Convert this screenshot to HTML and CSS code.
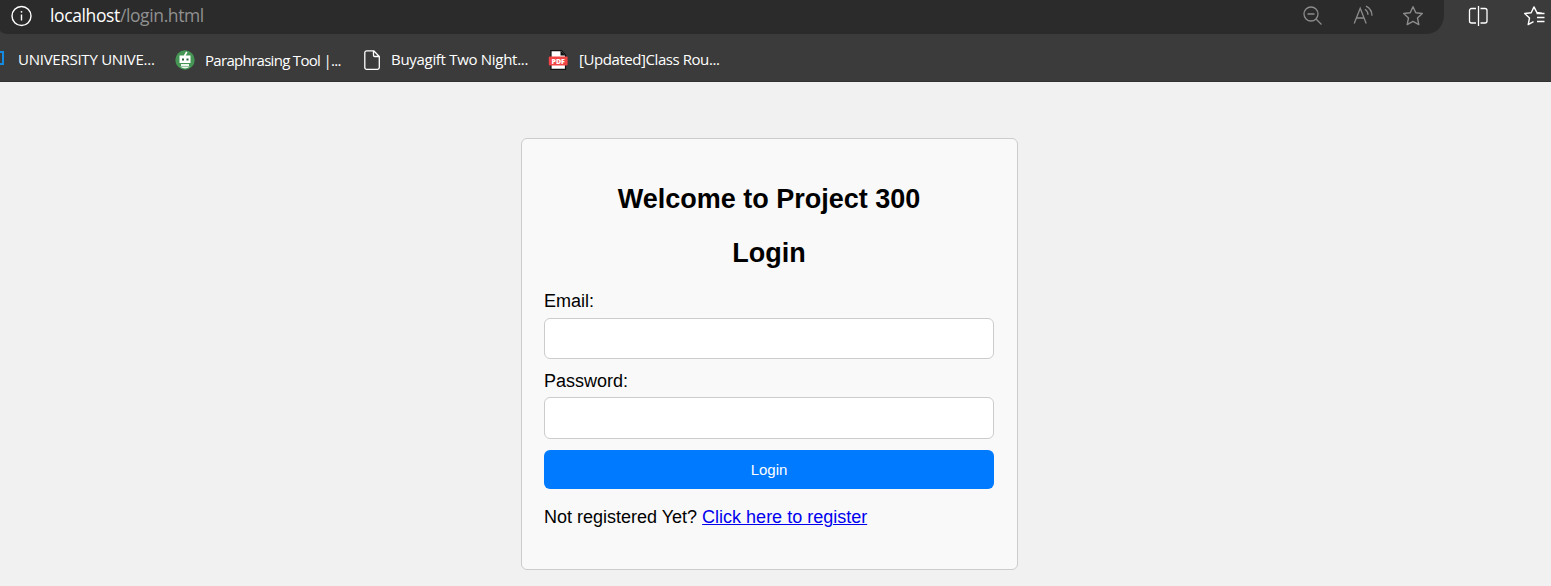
FILE: index.html
```
<!DOCTYPE html>
<html lang="en">
<head>
<meta charset="utf-8">
<title>Login</title>
<link rel="stylesheet" href="styles.css">
</head>
<body>
<header class="chrome">
  <div class="toolbar">
    <div class="address">
      <svg class="info" width="22" height="22" viewBox="0 0 22 22" fill="none" stroke="#fff" stroke-width="1.4"><circle cx="11.500" cy="11" r="9.500"/><path d="M11.500 9.500v6"/><circle cx="11.500" cy="6.800" r=".9" fill="#fff" stroke="none"/></svg>
      <div class="url">localhost<span class="path">/login.html</span></div>
      <div class="tools">
        <svg width="22" height="22" viewBox="0 0 22 22" fill="none" stroke="#8c8c8c" stroke-width="1.300"><circle cx="9" cy="9" r="7"/><path d="M5.500 9h7M14 14l5.500 5.500"/></svg>
        <svg width="22" height="22" viewBox="0 0 22 22" fill="none" stroke="#8c8c8c" stroke-width="1.300"><path d="M2.200 18.500 8.200 3.200 14.200 18.500M4.500 13H12M13 4.200q3 2 3 5.600M14 1.200q6 3 6 9.600"/></svg>
        <svg width="22" height="22" viewBox="0 0 22 22" fill="none" stroke="#8c8c8c" stroke-width="1.400" stroke-linejoin="round"><path d="M11 1.700l2.800 6 6.500.8-4.800 4.500 1.300 6.600-5.800-3.200-5.800 3.200L6.500 13 1.700 8.500l6.500-.8z"/></svg>
      </div>
    </div>
    <svg class="split" width="22" height="22" viewBox="0 0 22 22" fill="none" stroke="#fff" stroke-width="1.300"><path d="M9 3.500H4.500a2 2 0 0 0-2 2v10.500a2 2 0 0 0 2 2H9M13.500 3.500H18a2 2 0 0 1 2 2v10.500a2 2 0 0 1-2 2h-4.500M11.500 1v20"/></svg>
    <svg class="favorites" width="22" height="22" viewBox="0 0 22 22" fill="none" stroke="#fff" stroke-width="1.400" stroke-linejoin="round"><path d="M19 8.100l-5.200-.7L11 1.900 8.200 7.700l-6.500.8L6.500 13l-1.300 6.600 5.300-3M13.500 8.500h8M14 12.500h7.500M14 16.500h7.500"/></svg>
  </div>
  <nav class="bookmarks">
    <span class="edge-icon"></span>
    <span class="mark university">UNIVERSITY UNIVE...</span>
    <svg class="robot" width="20" height="20" viewBox="0 0 20 20"><circle cx="10" cy="10" r="9.700" fill="#459655"/><path d="M9.500 6 11.800 1.800" stroke="#fff" stroke-width="1.600"/><path d="M4.500 5.500h11v7.500h-11z" fill="#fff"/><path d="M7 8.500h2v2H7zm4.500 0h2v2h-2z" fill="#285d38"/><path d="M6 14h8v2H6zM5 16.500h10q-5 4-10 0z" fill="#e9f4ea"/></svg>
    <span class="mark paraphrase">Paraphrasing Tool |...</span>
    <svg class="page" width="16" height="20" viewBox="0 0 16 20" fill="none" stroke="#fff" stroke-width="1.300" stroke-linejoin="round"><path d="M2.700.8h7l5.600 5.700v11a1.800 1.800 0 0 1-1.800 1.800H2.700A1.900 1.900 0 0 1 .8 17.400V2.700A1.900 1.900 0 0 1 2.700.8zM9.500 1v4.300a1.200 1.200 0 0 0 1.200 1.200H15"/></svg>
    <span class="mark buyagift">Buyagift Two Night...</span>
    <svg class="pdf" width="20" height="20" viewBox="0 0 20 20"><path d="M3 .7h10.500L17.500 5v14.300H3z" fill="#fff" stroke="#111" stroke-width="1.200"/><path d="M12.500.5v5h5z" fill="#111"/><rect x=".8" y="6.500" width="18.800" height="9" rx="1" fill="#f14444"/><text class="pdf-label" x="10.200" y="13.600" text-anchor="middle" fill="#fff">PDF</text></svg>
    <span class="mark updated">[Updated]Class Rou...</span>
  </nav>
</header>
<main class="login-card">
  <h2>Welcome to Project 300</h2>
  <h2>Login</h2>
  <form>
    <label for="email">Email:</label>
    <input id="email" type="email">
    <label for="password">Password:</label>
    <input id="password" class="password" type="password">
    <button type="button">Login</button>
  </form>
  <p>Not registered Yet? <a href="#">Click here to register</a></p>
</main>
</body>
</html>
```

FILE: styles.css
```
* { box-sizing: border-box; }
body {
  margin: 0;
  height: 586px;
  overflow: hidden;
  background: #f1f1f1;
  color: #000;
  font: 18px/20px "Liberation Sans", Arial, sans-serif;
}
svg { display: block; flex: none; }
.chrome {
  height: 82px;
  background: #3b3b3b;
  border-bottom: 1px solid #323232;
  font-family: "Open Sans", "Noto Sans", sans-serif;
  overflow: hidden;
}
.toolbar { display: flex; height: 34px; }
.address {
  width: 1444px;
  height: 34px;
  flex: none;
  display: flex;
  background: #2b2b2b;
  border-radius: 0 0 17px 8px / 0 0 19px 4px;
  padding-left: 10px;
}
.info { margin-top: 5px; }
.url {
  margin-left: 18px;
  font-size: 17.500px;
  line-height: 31px;
  letter-spacing: -.38px;
  color: #fff;
  white-space: nowrap;
}
.path { color: #919191; }
.tools { display: flex; gap: 28px; margin: 5px 20px 0 auto; }
.split { margin: 5px 0 0 23px; }
.favorites { margin: 5px 0 0 34px; }
.bookmarks { display: flex; height: 48px; padding-top: 16px; }
.edge-icon {
  width: 4px;
  height: 14px;
  margin-top: 1px;
  border: 2px solid #148be2;
  border-left: 0;
  flex: none;
}
.mark {
  margin-top: -1px;
  font-size: 15px;
  line-height: 20px;
  letter-spacing: -.3px;
  color: #fff;
  white-space: nowrap;
  flex: none;
}
.university { margin-left: 14px; width: 157px; letter-spacing: -.25px; }
.paraphrase { margin-top: 0; margin-left: 10px; width: 159px; letter-spacing: -.69px; }
.buyagift { margin-left: 11px; width: 157px; }
.updated { margin-left: 11px; letter-spacing: -.43px; }
.pdf-label { font: 800 7px "Open Sans", sans-serif; }
.login-card {
  width: 497px;
  height: 432px;
  margin: 56px 0 0 521px;
  padding: 44px 23px 0 22px;
  background: #f9f9f9;
  border: 1px solid #ccc;
  border-radius: 6px;
}
h2 {
  margin: 0 0 22px;
  font-size: 27px;
  line-height: 32px;
  text-align: center;
}
form { display: flex; flex-direction: column; }
label { height: 20px; margin-bottom: 7px; }
input {
  width: 450px;
  height: 41px;
  margin: 0 0 12px;
  padding: 11px;
  background: #fff;
  border: 1px solid #ccc;
  border-radius: 6px;
  font: 15px "Liberation Sans", Arial, sans-serif;
}
label[for="password"] { margin-bottom: 6px; }
.password { height: 42px; margin-bottom: 11px; }
button {
  width: 450px;
  height: 39px;
  padding: 0;
  border: 0;
  border-radius: 6px;
  background: #007bff;
  color: #fff;
  font: 15px "Liberation Sans", Arial, sans-serif;
}
p { margin: 18px 0 0; }
a { color: #00e; }
```
